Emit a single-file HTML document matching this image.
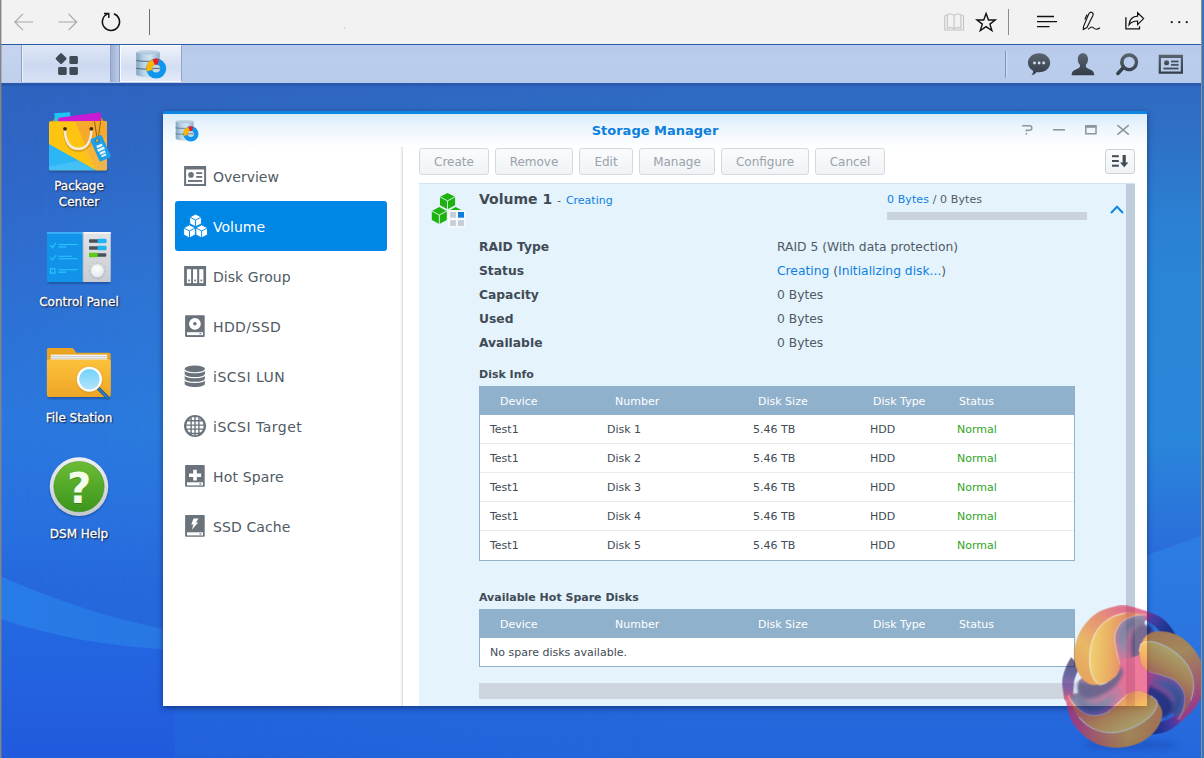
<!DOCTYPE html>
<html lang="en">
<head>
<meta charset="utf-8">
<title>Storage Manager</title>
<style>
*{box-sizing:border-box;margin:0;padding:0}
html,body{width:1204px;height:758px;overflow:hidden}
body{position:relative;font-family:"DejaVu Sans","Liberation Sans",sans-serif;font-size:12px;color:#505a64;background:#2560d8}
.abs{position:absolute}
#desktop{position:absolute;left:0;top:83px;width:1204px;height:675px;background:linear-gradient(to bottom,#2e63bc 0,#2c62c4 120px,#2761d6 330px,#2360dc 520px,#2160dc 675px)}
#browser{position:absolute;left:0;top:0;width:1204px;height:44px;background:#f2f2f2}
#taskbar{position:absolute;left:0;top:44px;width:1204px;height:39.500px;background:linear-gradient(to bottom,#b6c9ea 0,#bbcdec 40%,#b9cbeb 100%);border-top:1px solid #2a5aa5;border-bottom:1px solid #2b59ae}
.edge{position:absolute;top:0;width:2px;height:758px;background:#8a8a8a}
.tbtn{position:absolute;top:1px;height:36px;background:linear-gradient(to bottom,#dfe7f6 0,#cbd8f0 55%,#d8e2f4 100%);border-left:1px solid #eef3fb;border-right:1px solid #8fa3c8}
.dlabel{position:absolute;width:140px;text-align:center;color:#fff;font-size:12px;line-height:16px;text-shadow:1px 1px 1.500px rgba(0,0,20,.85),0 0 2px rgba(0,0,30,.45);-webkit-text-stroke:.3px #fff}
#win{position:absolute;left:163px;top:111px;width:984px;height:595px;background:#fff;box-shadow:0 2px 6px rgba(0,0,30,.45)}
#wintop{position:absolute;left:0;top:0;width:984px;height:3px;background:#0d86e3}
#titlebar{position:absolute;left:0;top:3px;width:984px;height:34px;background:linear-gradient(to bottom,#d9ecfb 0,#eef6fd 45%,#fff 100%)}
#title{position:absolute;left:0;top:121px;width:984px;text-align:center;font-weight:bold;font-size:13px;color:#0d7fdd;line-height:18px}
.nav{position:absolute;left:12px;width:212px;height:50px;padding-top:.500px;border-radius:3px;font-size:14px;line-height:50px;color:#505a64;padding-left:38px;white-space:nowrap}
.nav.sel{background:#0086e5;color:#fff}
.nav svg{position:absolute;left:8px;top:12px}
.btn{position:absolute;top:36.500px;height:27px;border:1px solid #d3d9df;border-radius:3px;background:linear-gradient(to bottom,#fafbfc,#f0f3f6);color:#9aa2ab;font-size:12px;line-height:27.500px;text-align:center}
#panel{position:absolute;left:256px;top:72px;width:716px;height:523px;background:#e5f3fd;border-top:1px solid #d3e3f1;overflow:hidden}
.k{position:absolute;left:60px;font-weight:bold;font-size:12.3px;color:#414b55;white-space:nowrap;line-height:16px}
.v{position:absolute;left:358px;font-size:12.3px;color:#505a64;white-space:nowrap;line-height:16px}
.blue{color:#0d7fdd}
.grid{position:absolute;left:60px;width:596px;border:1px solid #8fb0cb;background:#fff}
.gh{height:28px;background:#8fb1cc;color:#fff;font-size:11px;line-height:30px;position:relative}
.gr{height:29px;border-bottom:1px solid #e6ecf1;font-size:11px;line-height:28.600px;position:relative;color:#414b55}
.gr:last-child{border-bottom:0}
.gh span,.gr span{position:absolute;top:0;white-space:nowrap}
.gr span{top:1px}
.ok{color:#2fa51d}
</style>
</head>
<body>
<div id="desktop">
<svg class="abs" style="left:0;top:0" width="1204" height="675" viewBox="0 83 1204 675">
<defs>
<linearGradient id="dl" x1="0" x2="0" y1="83" y2="758" gradientUnits="userSpaceOnUse">
<stop offset="0" stop-color="#2f63c0"/><stop offset=".12" stop-color="#2f66c6"/><stop offset=".3" stop-color="#2e6fd2"/><stop offset=".5" stop-color="#2b77de"/><stop offset=".66" stop-color="#2870e0"/><stop offset=".74" stop-color="#2668dc"/><stop offset="1" stop-color="#2160dc"/></linearGradient>
<linearGradient id="dr" x1="0" x2="0" y1="83" y2="758" gradientUnits="userSpaceOnUse">
<stop offset="0" stop-color="#3069c2"/><stop offset=".08" stop-color="#2e70c6"/><stop offset=".2" stop-color="#2b80d3"/><stop offset=".3" stop-color="#2a85d8"/><stop offset=".53" stop-color="#2a86da"/><stop offset=".69" stop-color="#2a6edb"/><stop offset="1" stop-color="#2366dc"/></linearGradient>
<linearGradient id="dr2" x1="0" x2="0" y1="535" y2="758" gradientUnits="userSpaceOnUse"><stop offset="0" stop-color="#2c7de2"/><stop offset=".6" stop-color="#2a72e0"/><stop offset="1" stop-color="#2466dc"/></linearGradient>
<linearGradient id="dmix" x1="0" x2="1" y1="0" y2="0"><stop offset="0" stop-color="#fff" stop-opacity="1"/><stop offset=".55" stop-color="#fff" stop-opacity="0"/></linearGradient>
<mask id="mleft"><rect x="0" y="83" width="1204" height="675" fill="url(#dmix)"/></mask>
<linearGradient id="sw" x1="0" x2="1" y1="0" y2="0"><stop offset="0" stop-color="#287ce8"/><stop offset="1" stop-color="#2776e4"/></linearGradient><linearGradient id="swb" x1="0" x2="0" y1="0" y2="1"><stop offset="0" stop-color="#2468e2"/><stop offset="1" stop-color="#215add"/></linearGradient>
</defs>
<rect x="0" y="83" width="1204" height="675" fill="url(#dr)"/>
<rect x="0" y="83" width="1204" height="675" fill="url(#dl)" mask="url(#mleft)"/>
<path d="M1204 535L1100 572V758H1204Z" fill="url(#dr2)"/>
<path d="M0 576C55 600 110 619 175 631V650C110 647 55 637 0 619Z" fill="url(#sw)"/>
<path d="M0 619C55 637 110 647 175 650V758H0Z" fill="url(#swb)"/>
<linearGradient id="tsh" x1="0" x2="0" y1="0" y2="1"><stop offset="0" stop-color="#0a1e5a" stop-opacity=".35"/><stop offset="1" stop-color="#0a1e5a" stop-opacity="0"/></linearGradient><rect x="0" y="83" width="1204" height="4" fill="url(#tsh)"/>
</svg>
</div>
<div id="browser">
<svg class="abs" style="left:0;top:0" width="1204" height="44" viewBox="0 0 1204 44" fill="none" stroke-linecap="butt">
<g stroke="#a6a6a6" stroke-width="1.1">
<path d="M15 22H33M23 13.8L14.8 22L23 30.2"/>
<path d="M58.5 22H76.5M68.5 13.8L76.7 22L68.5 30.2"/>
</g>
<g stroke="#111" stroke-width="1.5">
<path d="M113.9 13.7A8.6 8.6 0 1 1 107.6 13.9"/>
<path d="M104 13.5H108.8V18" stroke-width="1.4"/>
</g>
<path d="M149.5 9V35" stroke="#6e6e6e" stroke-width="1"/>
<g stroke="#c4c4c4" stroke-width="1.100" fill="none">
<path d="M947.200 15.800H944.700V30H963.500V15.800H961"/>
<path d="M954.100 15.400C952.600 14 949.600 13.800 947.300 14.600V28.200C949.600 27.400 952.600 27.600 954.100 29C955.600 27.600 958.600 27.400 960.900 28.200V14.600C958.600 13.800 955.600 14 954.100 15.400ZM954.100 15.400V29"/>
</g>
<path d="M986.1 13.6L988.5 20H995.2L989.9 24.1L991.9 30.5L986.1 26.6L980.3 30.5L982.3 24.1L977 20H983.7Z" stroke="#111" stroke-width="1.4" stroke-linejoin="miter"/>
<path d="M1008.5 9V35" stroke="#8c8c8c" stroke-width="1"/>
<g stroke="#111" stroke-width="1.3">
<path d="M1037 16.5H1054M1037 21.6H1057M1037 26.7H1049.5"/>
<path d="M1083.300 29.500L1083.500 26.600L1088.600 14.200C1089.400 12.400 1090.800 11.800 1092 12.400C1093.200 13 1093.500 14.200 1092.800 15.800L1086.900 27.600ZM1087 14.600L1084.800 19.400" stroke-width="1.100"/>
<path d="M1088 29.300C1089.600 28.400 1090.600 27 1091.800 27C1093.200 27 1094 29.300 1096.200 29.300C1097.800 29.300 1098.800 28.600 1099.900 27.800" stroke-width="1.100"/>
<path d="M1125.900 17.300V28.800H1139.500V26.300" stroke-width="1.300"/>
<path d="M1129 24.800C1129.600 19.600 1133 16.400 1137.600 16.200V12.700L1143.600 18.600L1137.600 24.600V21C1134 21 1131.200 22 1129 24.800Z" stroke-width="1.200" stroke-linejoin="miter"/>
</g>
<g fill="#111" stroke="none"><rect x="1170.8" y="21.2" width="1.9" height="1.9"/><rect x="1178.3" y="21.2" width="1.9" height="1.9"/><rect x="1185.8" y="21.2" width="1.9" height="1.9"/></g>
<rect x="344" y="27.5" width="1.4" height="1" fill="#b8b8b8" stroke="none"/>
</svg>
</div>
<div id="taskbar">
<div class="abs" style="left:2px;top:0;width:20px;height:37px;background:linear-gradient(to bottom,#c6d4ee,#bfcfec);border-right:1px solid #8a9fc6"></div>
<div class="tbtn" style="left:22px;width:89px;top:0;height:37px"></div>
<div class="abs" style="left:111px;top:0;width:10px;height:37px;background:linear-gradient(to right,#9eb0d3,#c4d2ee)"></div>
<div class="abs" style="left:120px;top:0;width:62px;height:37px;background:linear-gradient(to bottom,#eef2fb 0,#d3def2 60%,#e4ebf8 100%);border:1px solid #fafcff;border-right:1px solid #93a6ca;box-shadow:-1px 0 0 #8a9dc3"></div>
<svg class="abs" style="left:0;top:0" width="1204" height="37" viewBox="0 44.5 1204 37">
<defs>
<linearGradient id="cyl" x1="0" x2="1" y1="0" y2="0"><stop offset="0" stop-color="#7fa6c4"/><stop offset=".3" stop-color="#b9d3e6"/><stop offset=".6" stop-color="#d3e4f0"/><stop offset="1" stop-color="#8fb0ca"/></linearGradient>
<linearGradient id="cylt" x1="0" x2="0" y1="0" y2="1"><stop offset="0" stop-color="#c9dbe8"/><stop offset="1" stop-color="#a9c4d8"/></linearGradient>
</defs>
<defs><linearGradient id="tk" x1="0" x2="0" y1="0" y2="1"><stop offset="0" stop-color="#5a646e"/><stop offset="1" stop-color="#333d47"/></linearGradient></defs>
<g fill="#414b55">
<rect x="56.9" y="53.9" width="8.4" height="8.4" rx="1.2" transform="rotate(45 61.1 58.1)"/>
<rect x="69.4" y="55.6" width="8.5" height="8" rx="1.3"/>
<rect x="58.1" y="66.4" width="8.6" height="8" rx="1.3"/>
<rect x="69.4" y="66.4" width="8.5" height="8" rx="1.3"/>
</g>
<g transform="translate(136.2 49.5)"><g id="smi">
<path d="M0 2.2V24.6C0 26 5.3 27.2 11.8 27.2S23.6 26 23.6 24.6V2.2Z" fill="url(#cyl)"/>
<ellipse cx="11.8" cy="2.2" rx="11.8" ry="2.2" fill="url(#cylt)"/>
<path d="M0 10.4C3 11.6 20 11.6 23.6 10.4M0 18.2C3 19.4 20 19.4 23.6 18.2" stroke="#5a6670" stroke-width="1" fill="none"/>
<circle cx="20" cy="18.6" r="7" fill="none" stroke="#1196ee" stroke-width="6"/>
<path d="M12.2 12.2A10 10 0 0 0 10 18.6H16A4 4 0 0 1 17.2 15.8Z" fill="#ffb400" transform="rotate(14 20 18.6)"/>
<path d="M10.6 21.4A10 10 0 0 1 16.2 9.4L18.6 14.9A4 4 0 0 0 16.2 19.8Z" fill="#ffb400"/>
<path d="M16.6 9.2A10 10 0 0 1 23 9.1L21.3 14.8A4 4 0 0 0 18.8 14.8Z" fill="#ee1c24"/>
<circle cx="20" cy="18.6" r="3.6" fill="#c9dbe8" opacity=".9"/>
<path d="M16.4 18.4H23.4" stroke="#5a6670" stroke-width="1"/>
</g></g>
<path d="M1005.7 50.5V77.5" stroke="#7689ad" stroke-width="1"/><path d="M1006.7 50.5V77.5" stroke="#d4dff3" stroke-width="1"/>
<g fill="url(#tk)">
<path d="M1039.100 52.800C1045.300 52.800 1050.200 57 1050.200 62.300S1045.300 71.800 1039.100 71.800C1038.200 71.800 1037.400 71.700 1036.600 71.600C1035.400 73.400 1033.600 74.400 1031.400 74.900C1032.600 73.600 1033.200 72 1033.200 70.400C1030 68.700 1027.900 65.700 1027.900 62.300C1027.900 57 1032.900 52.800 1039.100 52.800Z"/>
<path d="M1082.900 52.8C1086 52.8 1088 55.400 1088 58.6C1088 61 1087.200 63.200 1085.800 64.6C1085.600 66.400 1086.400 67.4 1088.400 68.2C1091.600 69.4 1094 70.4 1094.300 74.7H1071.600C1071.900 70.4 1074.300 69.4 1077.400 68.2C1079.400 67.4 1080.300 66.400 1080 64.6C1078.600 63.200 1077.800 61 1077.800 58.6C1077.800 55.400 1079.800 52.8 1082.900 52.800Z"/>
<path d="M1129.200 52.800A9 9 0 1 1 1123.600 68.900L1119 74.300Q1117.800 75.300 1116.700 74.200Q1115.700 73 1116.700 72L1121.700 66.800A9 9 0 0 1 1129.200 52.800ZM1129.200 56.200A5.600 5.600 0 1 0 1129.200 67.400A5.600 5.600 0 0 0 1129.200 56.200Z" fill-rule="evenodd"/>
<path d="M1158.700 54.200H1183V73.300H1158.700ZM1160.900 57.600V71.100H1180.800V57.600Z" fill-rule="evenodd"/>
<circle cx="1166.600" cy="62.200" r="2.500"/>
<rect x="1171" y="60" width="7.600" height="1.800"/><rect x="1171" y="63.400" width="7.600" height="1.800"/><rect x="1163.400" y="67" width="15.200" height="1.900"/>
</g>
<path d="M1122.600 67.900L1118 72.900" stroke="#38424c" stroke-width="3.300" stroke-linecap="round" fill="none"/><g fill="#d4dff3"><circle cx="1034.500" cy="62.500" r="1.400"/><circle cx="1039.100" cy="62.500" r="1.400"/><circle cx="1043.700" cy="62.500" r="1.400"/></g>
</svg>
</div>
<svg class="abs" style="left:0;top:83px" width="163" height="460" viewBox="0 83 163 460">
<defs>
<linearGradient id="fold" x1="0" x2="0" y1="0" y2="1"><stop offset="0" stop-color="#fcc23c"/><stop offset="1" stop-color="#eea525"/></linearGradient>
<linearGradient id="foldb" x1="0" x2="0" y1="0" y2="1"><stop offset="0" stop-color="#eda623"/><stop offset="1" stop-color="#d98f17"/></linearGradient>
<linearGradient id="help" x1="0" x2="0" y1="0" y2="1"><stop offset="0" stop-color="#6cbb35"/><stop offset="1" stop-color="#3c961c"/></linearGradient>
<linearGradient id="ring" x1="0" x2="0" y1="0" y2="1"><stop offset="0" stop-color="#eef0f2"/><stop offset="1" stop-color="#c4c9ce"/></linearGradient>
<linearGradient id="lens" x1="0" x2="0" y1="0" y2="1"><stop offset="0" stop-color="#6fd0fa"/><stop offset="1" stop-color="#b5e6fb"/></linearGradient>
<linearGradient id="cpg" x1="0" x2="0" y1="0" y2="1"><stop offset="0" stop-color="#e2e4e6"/><stop offset="1" stop-color="#c9ccd0"/></linearGradient>
<radialGradient id="knob" cx=".5" cy=".35" r=".7"><stop offset="0" stop-color="#fff"/><stop offset="1" stop-color="#dfe5ea"/></radialGradient>
<filter id="sh" x="-20%" y="-20%" width="140%" height="150%"><feGaussianBlur stdDeviation="1.2"/></filter>
</defs>
<!-- Package Center -->
<rect x="50" y="168" width="57" height="4" fill="#0b2a66" opacity=".45" filter="url(#sh)"/>
<path d="M52.500 121.200L55 117.500H101.500L104 121.200Z" fill="#c98a12"/>
<path d="M54.300 113.200L70 112.200L72 126H55.500Z" fill="#20c4f4"/>
<path d="M58 120.200C58 118.400 59 117.600 60.400 117.400L98.500 112.400C100.200 112.200 101 113 101 114.500V126H58Z" fill="#c91ad6"/>
<rect x="49" y="121.200" width="58" height="49" rx="1.500" fill="#fdc512"/>
<path d="M107 121.200H75L96 170.200H105.500C106.400 170.200 107 169.600 107 168.700Z" fill="#f6a92c"/>
<path d="M49 144L96 170.200H50.500C49.600 170.200 49 169.600 49 168.700Z" fill="#2cb6f5"/>
<path d="M49 166.500L78 161L96 170.200H50.500C49.600 170.200 49 169.600 49 168.700Z" fill="#4cc4f8" opacity=".7"/>
<path d="M96 170.200L107 150V168.700C107 169.600 106.400 170.200 105.500 170.200Z" fill="#eab44e"/>
<path d="M96 170.200L83 151L107 138V150Z" fill="#f7bb3c" opacity=".7"/>
<path d="M65 129.500C65 141 69.500 148.800 78.200 148.800S91.300 141 91.300 129.500" fill="none" stroke="#c8860e" stroke-width="3.400" opacity=".55" transform="translate(0 1.500)"/>
<path d="M65 129.500C65 141 69.500 148.800 78.200 148.800S91.300 141 91.300 129.500" fill="none" stroke="#f6ead8" stroke-width="2.600" stroke-linecap="round"/>
<circle cx="65" cy="128.800" r="1.900" fill="#4a2c06"/><circle cx="91.300" cy="128.800" r="1.900" fill="#4a2c06"/>
<path d="M94.500 121.500C95.500 128 96.500 134 97.200 139.500M100.500 121.500C99.800 128 98.800 134 97.800 139.500" stroke="#7a5a14" stroke-width=".9" fill="none"/>
<g transform="rotate(-24 100.500 148)"><rect x="94.300" y="136" width="12.400" height="24.500" rx="1.400" fill="#1e9fe8"/><circle cx="100.500" cy="139.800" r="1.700" fill="#f6a92c" stroke="#0e6fb0" stroke-width=".7"/>
<rect x="97.400" y="144.500" width="6.200" height="2.300" fill="#e9f6fe"/><rect x="96.800" y="148" width="7.400" height="2.600" fill="#e9f6fe"/><rect x="97.600" y="151.800" width="5.800" height="2.300" fill="#e9f6fe"/><rect x="98" y="155.200" width="5" height="1.800" fill="#e9f6fe"/></g>
<!-- Control Panel -->
<rect x="48" y="279.500" width="62" height="4" fill="#0b2a66" opacity=".5" filter="url(#sh)"/>
<rect x="46.900" y="232" width="36" height="50" fill="#1193ea"/>
<rect x="46.900" y="232" width="36" height="1.800" fill="#3cb0f6"/>
<rect x="82.800" y="232" width="27.900" height="50" fill="url(#cpg)"/>
<rect x="82.800" y="232" width="27.900" height="1.800" fill="#f4f5f6"/>
<rect x="82.800" y="232" width="1.200" height="50" fill="#b4b9be" opacity=".6"/>
<g stroke="#2cc6ff" stroke-width="1.100" fill="none"><path d="M50.300 245.200L52.500 247.600L56 242.800"/><path d="M50.300 257.600L52.500 260L56 255.200"/><rect x="50.500" y="268.700" width="4.400" height="4.400"/>
<path d="M58.500 244.500H77.800M58.500 246.900H66.200M58.500 256.300H71.800M58.500 258.700H77.500M58.500 269.700H77.800M58.500 272.100H66"/></g>
<g><rect x="89" y="239.200" width="17.300" height="3.600" rx=".8" fill="#48525c"/><rect x="97.600" y="238.800" width="8.700" height="4.400" rx="1" fill="#1eb6f4"/>
<rect x="89" y="246.200" width="17.300" height="3.600" rx=".8" fill="#48525c"/><rect x="97.600" y="245.800" width="8.700" height="4.400" rx="1" fill="#1eb6f4"/>
<rect x="89" y="253.200" width="17.300" height="3.600" rx=".8" fill="#48525c"/><rect x="89" y="252.800" width="8.700" height="4.400" rx="1" fill="#5ccc1a"/></g>
<g stroke="#aeb4ba" stroke-width=".8"><path d="M97.300 261.800V263.200M92.800 263L93.500 264.200M101.800 263L101.100 264.200M89.500 266.300L90.700 267M105.100 266.300L103.900 267M88.300 270.800H89.700M104.900 270.800H106.300"/></g>
<circle cx="97.300" cy="272" r="6.800" fill="#9aa2aa" opacity=".55" filter="url(#sh)"/>
<circle cx="97.300" cy="270.800" r="6.600" fill="url(#knob)"/>
<!-- File Station -->
<rect x="48" y="394.500" width="62" height="4" fill="#0b2a66" opacity=".5" filter="url(#sh)"/>
<path d="M46.900 349.800C46.900 348.700 47.700 347.900 48.800 347.900H71.600C72.400 347.900 73 348.200 73.600 348.900L76.400 352.800H108.800C109.900 352.800 110.700 353.600 110.700 354.700V392H46.900Z" fill="url(#foldb)"/>
<rect x="50.800" y="354.600" width="56.400" height="8" fill="#f4f4f4"/><rect x="50.800" y="356.200" width="56.400" height="1" fill="#c9c9c9"/><rect x="50.800" y="358" width="56.400" height="1.300" fill="#d6d6d6"/>
<path d="M46.900 361.200C46.900 360.100 47.700 359.400 48.800 359.400H108.800C109.900 359.400 110.700 360.100 110.700 361.200V395.200C110.700 396.300 109.900 397 108.800 397H48.800C47.700 397 46.900 396.300 46.900 395.200Z" fill="url(#fold)"/>
<path d="M99 389L107.800 397.800" stroke="#175f9c" stroke-width="3.600" stroke-linecap="round"/>
<path d="M99 389L107.400 397.400" stroke="#2f86c8" stroke-width="1.400" stroke-linecap="round"/>
<circle cx="89.400" cy="379.800" r="12.500" fill="#a66f0c" opacity=".35" filter="url(#sh)"/>
<circle cx="89.400" cy="379.200" r="11.400" fill="url(#lens)" stroke="#fbfbfb" stroke-width="2.300"/>
<!-- DSM Help -->
<circle cx="79" cy="488.200" r="29" fill="#0b2a66" opacity=".4" filter="url(#sh)"/>
<circle cx="79" cy="486.600" r="29.300" fill="url(#ring)"/>
<circle cx="79" cy="486.600" r="25.200" fill="url(#help)"/>
<circle cx="79" cy="486.600" r="25.200" fill="none" stroke="#2f7f14" stroke-width=".8" opacity=".5"/>
<text x="79.300" y="503.800" text-anchor="middle" font-family="'DejaVu Sans','Liberation Sans',sans-serif" font-weight="bold" font-size="42" fill="#2c7510" opacity=".6">?</text>
<text x="79.300" y="503" text-anchor="middle" font-family="'DejaVu Sans','Liberation Sans',sans-serif" font-weight="bold" font-size="42" fill="#f3fbe9">?</text>
</svg>
<div class="dlabel" style="left:9px;top:178px">Package<br>Center</div>
<div class="dlabel" style="left:9px;top:294px">Control Panel</div>
<div class="dlabel" style="left:9px;top:410px">File Station</div>
<div class="dlabel" style="left:9px;top:526px">DSM Help</div>
<div id="win">
<div id="wintop"></div>
<div id="titlebar"></div>
<svg class="abs" style="left:0;top:0" width="984" height="70" viewBox="163 111 984 70">
<g transform="translate(175.700 119.800) scale(.76)"><use href="#smi"/></g>
<g fill="none" stroke="#8d969f" stroke-width="1.500">
<path d="M1022.200 125.800H1029.500Q1031.800 125.800 1031.800 128T1029.500 130.300H1026.400V131.600"/><path d="M1026.400 133V134.600"/>
<path d="M1053 129.800H1065" stroke-width="1.600"/>
<path d="M1085.800 127.200V133.800H1096V127.200"/><path d="M1085 126.400H1096.800" stroke-width="2.800"/>
<path d="M1117.400 125.200L1128.800 134.700M1128.800 125.200L1117.400 134.700"/>
</g>
</svg>
<div id="title" style="top:11px">Storage Manager</div>
<div class="abs" style="left:236.500px;top:36px;width:3.300px;height:559px;background:linear-gradient(to right,rgba(215,215,218,0),rgba(215,215,218,.35) 50%,#d9d9dc 100%)"></div>
<div class="nav" style="top:40px"><svg width="26" height="26" viewBox="0 0 26 26"><path d="M1.100 2.900H23.100V22.900H1.100ZM3.100 6.400V20.900H21.100V6.400Z" fill="#6a737c" fill-rule="evenodd"/><circle cx="8" cy="11.900" r="2.800" fill="#6a737c"/><rect x="13.200" y="9.200" width="6" height="1.800" fill="#6a737c"/><rect x="13.200" y="13" width="6" height="1.800" fill="#6a737c"/><rect x="5" y="17" width="14.200" height="1.900" fill="#6a737c"/></svg>Overview</div>
<div class="nav sel" style="top:90px"><svg width="26" height="26" viewBox="0 0 26 26"><g fill="#fff" stroke="#0086e5" stroke-width=".9" stroke-linejoin="round" transform="translate(-.400 -1.700) scale(1.030 1.075)">
<path d="M12.600 2.600L18.300 5.400V11.600L12.600 14.400L6.900 11.600V5.400Z"/><path d="M6.900 5.400L12.600 8.200L18.300 5.400M12.600 8.200V14.400" fill="none"/>
<path d="M6.700 12.600L12.400 15.400V21.900L6.700 24.800L1 21.900V15.400Z"/><path d="M1 15.400L6.700 18.300L12.400 15.400M6.700 18.300V24.800" fill="none"/>
<path d="M18.500 12.600L24.200 15.400V21.900L18.500 24.800L12.800 21.900V15.400Z"/><path d="M12.800 15.400L18.500 18.300L24.200 15.400M18.500 18.300V24.800" fill="none"/>
</g></svg>Volume</div>
<div class="nav" style="top:140px;letter-spacing:0.05px"><svg width="26" height="26" viewBox="0 0 26 26"><rect x="1.100" y="2.900" width="22" height="20" rx=".6" fill="#6a737c"/><g fill="#fff"><rect x="3.900" y="6.200" width="4.200" height="13.900"/><rect x="10" y="6.200" width="4.200" height="13.900"/><rect x="16.200" y="6.200" width="4.200" height="13.900"/></g><g fill="#6a737c"><rect x="5.200" y="16.600" width="1.700" height="1.700"/><rect x="11.300" y="16.600" width="1.700" height="1.700"/><rect x="17.500" y="16.600" width="1.700" height="1.700"/></g></svg>Disk Group</div>
<div class="nav" style="top:190px;letter-spacing:0.4px"><svg width="26" height="26" viewBox="0 0 26 26"><rect x="2.100" y="2.300" width="19.600" height="21.600" rx=".8" fill="#6a737c"/><circle cx="11.900" cy="10.800" r="5.900" fill="#fff"/><circle cx="11.900" cy="10.800" r="1.800" fill="#6a737c"/><rect x="4" y="19.200" width="16" height="2.900" fill="#fff"/><rect x="16.400" y="20.100" width="2" height="1.100" fill="#6a737c"/></svg>HDD/SSD</div>
<div class="nav" style="top:240px;letter-spacing:0.5px"><svg width="26" height="26" viewBox="0 0 26 26"><g fill="#6a737c"><path d="M1.700 5.800V20.800C1.700 22.600 6.200 24 11.800 24S21.900 22.600 21.900 20.800V5.800Z"/><ellipse cx="11.800" cy="5.800" rx="10.100" ry="3.300"/></g><g fill="none" stroke="#fff" stroke-width="1.100"><path d="M1.700 6.600C1.700 8.400 6.200 9.800 11.800 9.800S21.900 8.400 21.900 6.600"/><path d="M1.700 11.400C1.700 13.200 6.200 14.600 11.800 14.600S21.900 13.200 21.900 11.400"/><path d="M1.700 16.200C1.700 18 6.200 19.400 11.800 19.400S21.900 18 21.900 16.200"/></g></svg>iSCSI LUN</div>
<div class="nav" style="top:290px;letter-spacing:0.5px"><svg width="26" height="26" viewBox="0 0 26 26"><circle cx="12" cy="13" r="11" fill="#6a737c"/><g fill="#fff"><path d="M4.400 8.400H7.400V11.400H3.400ZM8.800 8.400H11.300V11.400H8.800ZM12.700 8.400H15.200V11.400H12.700ZM16.600 8.400H19.600L20.600 11.400H16.600ZM3.400 12.800H7.400V15.400H3.700ZM8.800 12.800H11.300V15.400H8.800ZM12.700 12.800H15.200V15.400H12.700ZM16.600 12.800H20.600L20.300 15.400H16.600ZM4.200 16.800H7.400V19.200H6ZM8.800 16.800H11.300V19.800H8.800ZM12.700 16.800H15.200V19.800H12.700ZM16.600 16.800H19.800L18 19.200H16.600ZM6.200 7L8 4.800H7.400V7ZM8.800 4.200H11.300V7H8.800ZM12.700 4.200H15.200V7H12.700ZM16.600 4.800L17.800 7H16.600ZM8.800 21.200H11.300V22.400L8.800 21.600ZM12.700 21.200H15.200V21.600L12.700 22.400Z"/></g></svg>iSCSI Target</div>
<div class="nav" style="top:340px;letter-spacing:0.15px"><svg width="26" height="26" viewBox="0 0 26 26"><rect x="2.100" y="2.100" width="19.600" height="21.600" rx=".8" fill="#6a737c"/><path d="M10.200 6.800H13.800V10.400H18.100V14H13.800V17.500H10.200V14H6V10.400H10.200Z" fill="#fff"/><rect x="4" y="19.300" width="16" height="3.100" fill="#fff"/><rect x="16.400" y="20.400" width="2" height="1.100" fill="#6a737c"/></svg>Hot Spare</div>
<div class="nav" style="top:390px;letter-spacing:0.1px"><svg width="26" height="26" viewBox="0 0 26 26"><rect x="2.100" y="2.100" width="19.600" height="21.600" rx=".8" fill="#6a737c"/><path d="M10.600 5.400H15.600L12.800 9.600H15.200L8.800 16.800L10.400 11.400H8.200Z" fill="#fff"/><rect x="4" y="19.300" width="16" height="3.100" fill="#fff"/><rect x="16.400" y="20.400" width="2" height="1.100" fill="#6a737c"/></svg>SSD Cache</div>
<div class="btn" style="left:256px;width:70px">Create</div>
<div class="btn" style="left:332px;width:78px">Remove</div>
<div class="btn" style="left:416px;width:54px">Edit</div>
<div class="btn" style="left:476px;width:76px">Manage</div>
<div class="btn" style="left:558px;width:88px">Configure</div>
<div class="btn" style="left:652px;width:70px">Cancel</div>
<div class="btn" style="left:942px;top:37.500px;width:30px;height:25.500px;border-color:#cbd2d9"></div>
<svg class="abs" style="left:942px;top:37px" width="30" height="27" viewBox="1105 148 30 27"><g fill="#414b55"><rect x="1112" y="155.200" width="6.800" height="2"/><rect x="1112" y="160" width="6.800" height="2"/><rect x="1112" y="164.700" width="6.800" height="2"/><path d="M1122.600 155H1125.800V162.600H1128.400L1124.200 167.200L1120 162.600H1122.600Z"/></g></svg>
<div id="panel">
<svg class="abs" style="left:12px;top:7px" width="38" height="38" viewBox="431 191 38 38">
<g fill="#1db30f">
<path d="M447.500 193L455.100 196.800V205.600L447.500 209.700L440 205.600V196.800Z"/>
<path d="M439.300 206.900L446.800 211V220L439.300 224L431.800 220V211Z"/>
<path d="M455.700 206.900L463.200 211V220L455.700 224L448.200 220V211Z"/>
</g>
<g fill="none" stroke="#e5f3fd" stroke-width=".9"><path d="M440 196.800L447.500 200.900L455.100 196.800M447.500 200.900V209.700"/><path d="M431.800 211L439.300 215L446.800 211M439.300 215V224"/><path d="M440 205.600L447.500 209.700L455.100 205.600" stroke-width=".7"/></g>
<rect x="447.900" y="210" width="18.100" height="17.800" fill="#f4f9fd"/>
<rect x="450.200" y="212" width="5.700" height="5.700" fill="#c5cdd6"/><rect x="458" y="212" width="6" height="5.700" fill="#0f7ddb"/><rect x="450.200" y="220.200" width="5.700" height="5.700" fill="#c5cdd6"/><rect x="458" y="220.200" width="6" height="5.700" fill="#c5cdd6"/>
</svg>
<div class="abs" style="left:60px;top:5px;font-size:14px;font-weight:bold;color:#414b55;line-height:20px;white-space:nowrap">Volume 1 <span style="font-size:11px;font-weight:normal;color:#505a64">-</span> <span style="font-size:11px;font-weight:normal;color:#0d7fdd">Creating</span></div>
<div class="abs" style="left:468px;top:8px;font-size:11px;line-height:16px;white-space:nowrap;letter-spacing:.1px"><span class="blue">0 Bytes</span> / 0 Bytes</div>
<div class="abs" style="left:468px;top:28px;width:200px;height:8px;background:#c8d3de"></div>
<svg class="abs" style="left:690px;top:19px" width="16" height="12" viewBox="0 0 16 12"><path d="M2 10L8 3.800L14 10" fill="none" stroke="#0d86e3" stroke-width="2"/></svg>
<div class="abs" style="left:707px;top:0;width:8.500px;height:523px;background:#bfccd9"></div>
<div class="k" style="top:55px">RAID Type</div><div class="v" style="top:55px">RAID 5 (With data protection)</div>
<div class="k" style="top:79px">Status</div><div class="v" style="top:79px"><span class="blue">Creating</span> (<span class="blue">Initializing disk...</span>)</div>
<div class="k" style="top:103px">Capacity</div><div class="v" style="top:103px">0 Bytes</div>
<div class="k" style="top:127px">Used</div><div class="v" style="top:127px">0 Bytes</div>
<div class="k" style="top:151px">Available</div><div class="v" style="top:151px">0 Bytes</div>
<div class="abs" style="left:60px;top:183px;font-size:11px;font-weight:bold;color:#414b55;line-height:16px">Disk Info</div>
<div class="grid" style="top:202px"><div class="gh"><span style="left:20px">Device</span><span style="left:135px">Number</span><span style="left:278px">Disk Size</span><span style="left:393px">Disk Type</span><span style="left:479px">Status</span></div><div class="gr"><span style="left:10px">Test1</span><span style="left:127px">Disk 1</span><span style="left:273px">5.46 TB</span><span style="left:390px">HDD</span><span class="ok" style="left:477px">Normal</span></div><div class="gr"><span style="left:10px">Test1</span><span style="left:127px">Disk 2</span><span style="left:273px">5.46 TB</span><span style="left:390px">HDD</span><span class="ok" style="left:477px">Normal</span></div><div class="gr"><span style="left:10px">Test1</span><span style="left:127px">Disk 3</span><span style="left:273px">5.46 TB</span><span style="left:390px">HDD</span><span class="ok" style="left:477px">Normal</span></div><div class="gr"><span style="left:10px">Test1</span><span style="left:127px">Disk 4</span><span style="left:273px">5.46 TB</span><span style="left:390px">HDD</span><span class="ok" style="left:477px">Normal</span></div><div class="gr"><span style="left:10px">Test1</span><span style="left:127px">Disk 5</span><span style="left:273px">5.46 TB</span><span style="left:390px">HDD</span><span class="ok" style="left:477px">Normal</span></div></div>
<div class="abs" style="left:60px;top:406px;font-size:11px;font-weight:bold;color:#414b55;line-height:16px;white-space:nowrap">Available Hot Spare Disks</div>
<div class="grid" style="top:425px"><div class="gh"><span style="left:20px">Device</span><span style="left:135px">Number</span><span style="left:278px">Disk Size</span><span style="left:393px">Disk Type</span><span style="left:479px">Status</span></div><div class="gr" style="height:28px"><span style="left:10px">No spare disks available.</span></div></div>
<div class="abs" style="left:60px;top:499px;width:596px;height:15.500px;background:#cdd6df"></div>
</div>
</div>
<svg class="abs" style="left:1050px;top:595px" width="154" height="163" viewBox="1050 595 154 163">
<defs>
<linearGradient id="lgr" gradientUnits="userSpaceOnUse" x1="-270" y1="40" x2="40" y2="-350"><stop offset="0" stop-color="#e76e00"/><stop offset="0.35" stop-color="#eb960d"/><stop offset="0.65" stop-color="#e75a25"/><stop offset="0.85" stop-color="#df2c4a"/><stop offset="1" stop-color="#d0245c"/></linearGradient>
<linearGradient id="lgt" gradientUnits="userSpaceOnUse" x1="60" y1="-320" x2="200" y2="-210"><stop offset="0" stop-color="#b01858"/><stop offset="0.3" stop-color="#5a1c80"/><stop offset="0.7" stop-color="#1e1264"/><stop offset="1" stop-color="#160948"/></linearGradient>
<linearGradient id="lgb" gradientUnits="userSpaceOnUse" x1="-220" y1="-120" x2="-50" y2="-110"><stop offset="0" stop-color="#f7be25"/><stop offset="0.55" stop-color="#ef8e08"/><stop offset="1" stop-color="#e75518"/></linearGradient>
<linearGradient id="lgw" gradientUnits="userSpaceOnUse" x1="10" y1="-300" x2="-20" y2="40"><stop offset="0" stop-color="#604874"/><stop offset="0.4" stop-color="#a63a6c"/><stop offset="0.75" stop-color="#e3285c"/><stop offset="1" stop-color="#e62e62"/></linearGradient>
<linearGradient id="lgg" gradientUnits="userSpaceOnUse" x1="0" y1="-290" x2="-30" y2="-70"><stop offset="0" stop-color="#3a3a66"/><stop offset="0.6" stop-color="#5a4a78"/><stop offset="1" stop-color="#b03870" stop-opacity="0.3"/></linearGradient>
<filter id="lsh" x="-30%" y="-100%" width="160%" height="300%"><feGaussianBlur stdDeviation="3"/></filter>
<filter id="lb1" x="-30%" y="-30%" width="160%" height="160%"><feGaussianBlur stdDeviation="7"/></filter>
<g id="bk"><path d="M74 -312C63 -311 32 -312 10 -305C-12 -298 -39 -289 -55 -272C-71 -255 -84 -228 -88 -205C-92 -182 -84 -159 -80 -135C-76 -111 -63 -81 -62 -60C-61 -39 -67 -24 -75 -10C-83 4 -104 17 -110 22L-40 90L60 40L110 -60L120 -160L110 -230L60 -262Z" fill="url(#lgw)"/><path d="M60 -290C50 -289 18 -291 0 -285C-18 -279 -33 -269 -45 -255C-57 -241 -67 -220 -70 -200C-73 -180 -66 -157 -62 -135C-58 -113 -48 -81 -45 -70L-10 -80C-12 -90 -22 -120 -25 -140C-28 -160 -33 -182 -30 -200C-27 -218 -20 -235 -5 -245C10 -255 49 -259 60 -262Z" fill="url(#lgg)" filter="url(#lb1)"/><path d="M20 -250C27 -252 46 -264 60 -262C74 -260 103 -252 105 -240C107 -228 81 -208 70 -190C59 -172 44 -150 40 -130C36 -110 40 -88 45 -70C50 -52 66 -28 70 -20L35 -30C30 -38 12 -62 5 -80C-2 -98 -4 -120 -5 -140C-6 -160 -4 -182 0 -200C4 -218 17 -242 20 -250Z" fill="#160948" opacity=".85" filter="url(#lb1)"/></g>
<path id="tl" d="M60 -334C74 -328 120 -314 142 -300C164 -286 179 -268 192 -252C205 -236 217 -213 222 -205L162 -190C159 -194 154 -206 146 -216C138 -226 130 -238 116 -250C102 -262 69 -282 60 -288Z" fill="url(#lgt)"/>
<g id="fr"><path d="M-150 42C-161 42 -196 47 -215 40C-234 33 -250 18 -262 0C-274 -18 -285 -45 -290 -70C-295 -95 -296 -122 -290 -150C-284 -178 -272 -212 -255 -240C-238 -268 -211 -297 -185 -315C-159 -333 -128 -343 -100 -350C-72 -357 -49 -359 -20 -355C9 -351 58 -332 74 -328L74 -300C62 -303 21 -315 0 -318C-21 -321 -33 -321 -50 -318C-67 -315 -82 -310 -100 -300C-118 -290 -143 -274 -160 -255C-177 -236 -191 -212 -200 -185C-209 -158 -214 -124 -215 -95C-216 -66 -212 -32 -205 -10C-198 12 -179 31 -170 40C-161 49 -153 42 -150 42Z" fill="url(#lgr)"/><path d="M74 -312C62 -313 21 -319 0 -320C-21 -321 -33 -321 -50 -318C-67 -315 -82 -310 -100 -300C-118 -290 -143 -274 -160 -255C-177 -236 -191 -212 -200 -185C-209 -158 -214 -124 -215 -95C-216 -66 -212 -32 -205 -10C-198 12 -186 35 -170 40C-154 45 -120 25 -110 22L-110 22C-104 17 -83 4 -75 -10C-67 -24 -61 -39 -62 -60C-63 -81 -76 -111 -80 -135C-84 -159 -92 -182 -88 -205C-84 -228 -71 -255 -55 -272C-39 -289 -12 -298 10 -305C32 -312 63 -311 74 -312Z" fill="url(#lgb)"/><path d="M-40 -318C-50 -315 -80 -310 -100 -300C-120 -290 -143 -274 -160 -255C-177 -236 -191 -212 -200 -185C-209 -158 -214 -124 -215 -95C-216 -66 -212 -32 -205 -10C-198 12 -183 33 -170 40C-157 47 -132 32 -125 30" fill="none" stroke="#fff6e2" stroke-width="4.500" opacity=".9"/><path d="M74 -312C63 -311 32 -312 10 -305C-12 -298 -39 -289 -55 -272C-71 -255 -84 -228 -88 -205C-92 -182 -84 -159 -80 -135C-76 -111 -65 -72 -62 -60" fill="none" stroke="#fff0d8" stroke-width="3" opacity=".7"/></g>
</defs>
<ellipse cx="1130" cy="745" rx="48" ry="4" fill="#0a2a8a" opacity=".3" filter="url(#lsh)"/>
<g transform="translate(1132.200 676.200) scale(0.1978)" opacity=".63">
<circle r="120" fill="#e3285c"/>
<use href="#bk"/><use href="#bk" transform="rotate(120)"/><use href="#bk" transform="rotate(240) scale(1.06)"/>
<use href="#tl"/><use href="#tl" transform="rotate(120)"/><use href="#tl" transform="rotate(240) scale(1.07)"/>
<use href="#fr"/><use href="#fr" transform="rotate(120)"/><use href="#fr" transform="rotate(240) scale(1.06)"/>
</g>
</svg>
<div class="edge" style="left:0;width:2px;background:linear-gradient(to right,#858585 1px,rgba(133,133,133,.4) 1px)"></div>
<div class="edge" style="left:1201px;width:3px;background:linear-gradient(to right,#8f9196 1px,#3474b8 1px)"></div>
</body>
</html>
